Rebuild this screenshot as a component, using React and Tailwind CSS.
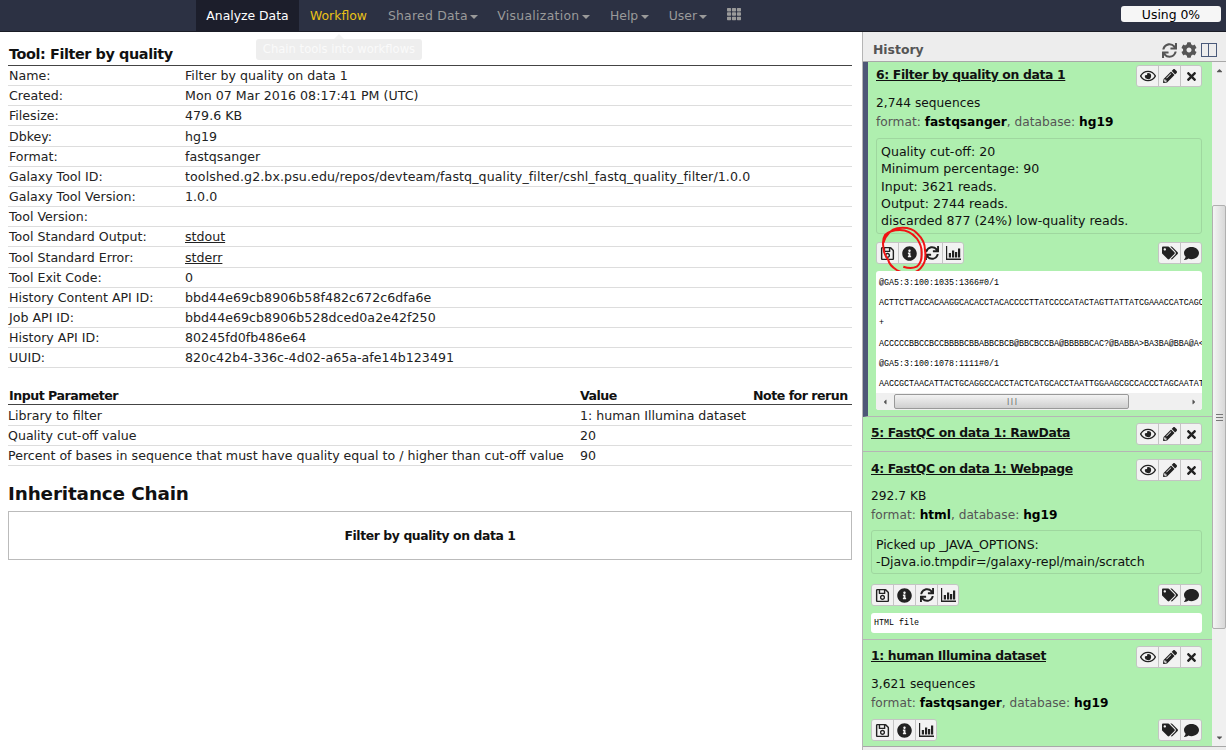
import React from 'react';
import {
  FaRegEye, FaPencilAlt, FaTimes, FaRegSave, FaInfoCircle, FaSync, FaTags, FaComment, FaCog, FaTh, FaCaretDown, FaCaretUp, FaCaretLeft, FaCaretRight,
} from 'react-icons/fa';

const details = [
  ['Name:', 'Filter by quality on data 1'],
  ['Created:', 'Mon 07 Mar 2016 08:17:41 PM (UTC)'],
  ['Filesize:', '479.6 KB'],
  ['Dbkey:', 'hg19'],
  ['Format:', 'fastqsanger'],
  ['Galaxy Tool ID:', 'toolshed.g2.bx.psu.edu/repos/devteam/fastq_quality_filter/cshl_fastq_quality_filter/1.0.0'],
  ['Galaxy Tool Version:', '1.0.0'],
  ['Tool Version:', ''],
  ['Tool Standard Output:', 'stdout', true],
  ['Tool Standard Error:', 'stderr', true],
  ['Tool Exit Code:', '0'],
  ['History Content API ID:', 'bbd44e69cb8906b58f482c672c6dfa6e'],
  ['Job API ID:', 'bbd44e69cb8906b528dced0a2e42f250'],
  ['History API ID:', '80245fd0fb486e64'],
  ['UUID:', '820c42b4-336c-4d02-a65a-afe14b123491'],
];

const params = [
  ['Library to filter', '1: human Illumina dataset'],
  ['Quality cut-off value', '20'],
  ['Percent of bases in sequence that must have quality equal to / higher than cut-off value', '90'],
];

const peek = [
  '@GA5:3:100:1035:1366#0/1',
  'ACTTCTTACCACAAGGCACACCTACACCCCTTATCCCCATACTAGTTATTATCGAAACCATCAGC',
  '+',
  'ACCCCCBBCCBCCBBBBCBBABBCBCB@BBCBCCBA@BBBBBCAC?@BABBA>BA3BA@BBA@A<',
  '@GA5:3:100:1078:1111#0/1',
  'AACCGCTAACATTACTGCAGGCCACCTACTCATGCACCTAATTGGAAGCGCCACCCTAGCAATAT',
];

const NavItem = ({ label, caret, className }) => (
  <div className={`flex items-center pt-[2px] ${className}`}>
    <span>{label}</span>
    {caret && <div className="ml-[2.5px] mt-[1px] w-0 h-0 border-x-[4px] border-x-transparent border-t-[4px] border-t-[#9a9a9a]" />}
  </div>
);

const IconBtn = ({ children }) => (
  <div className="w-[22px] last:w-[20px] h-full flex items-center justify-center border-r border-[#c4c4c4] last:border-r-0 bg-[#f2f2f2] text-[#222]">
    {children}
  </div>
);

const BtnGroup = ({ children }) => (
  <div className="flex h-[22px] border border-[#c4c4c4] rounded-[3px] overflow-hidden">
    {children}
  </div>
);

const TopButtons = () => (
  <BtnGroup>
    <IconBtn><FaRegEye className="w-[16px] h-[16px]" /></IconBtn>
    <IconBtn><FaPencilAlt className="w-[14px] h-[14px]" /></IconBtn>
    <IconBtn><FaTimes className="w-[13px] h-[13px]" /></IconBtn>
  </BtnGroup>
);

const TagButtons = () => (
  <BtnGroup>
    <IconBtn><FaTags className="w-[16px] h-[16px]" /></IconBtn>
    <IconBtn><FaComment className="w-[15px] h-[15px]" /></IconBtn>
  </BtnGroup>
);

// axes with four bars, the FontAwesome 4 bar-chart-o shape
const BarChartIcon = () => (
  <svg className="w-[15px] h-[14px]" viewBox="0 0 15 14" fill="currentColor">
    <path d="M0 0h1.2v12.6H15V14H0z" />
    <path d="M2.8 7h2.2v4.6H2.8zM6 4.5h2.2v7.1H6zM9 6h2.2v5.6H9zM12 2.5h2.2v9.1H12z" />
  </svg>
);

const SaveBtn = () => <IconBtn><FaRegSave className="w-[15px] h-[15px]" /></IconBtn>;
const InfoBtn = () => <IconBtn><FaInfoCircle className="w-[15px] h-[15px]" /></IconBtn>;
const RerunBtn = () => <IconBtn><FaSync className="w-[14px] h-[14px]" /></IconBtn>;
const ChartBtn = () => <IconBtn><BarChartIcon /></IconBtn>;

const Title = ({ children }) => (
  <span className="font-bold underline pt-[1px] leading-[18px] text-[12.4px] tracking-[-0.35px]">{children}</span>
);

const Meta = ({ count, format }) => (
  <div className="text-[12.2px]">
    <div className="h-[19px] leading-[19px] text-[#111] tracking-[0.03px]">{count}</div>
    <div className="h-[19px] leading-[19px] text-[#555]">
      format: <b className="text-black tracking-[-0.03px]">{format}</b>, database: <b className="text-black">hg19</b>
    </div>
  </div>
);

export default function App() {
  return (
    <div className="h-[750px] overflow-hidden bg-white font-['DejaVu_Sans',sans-serif] text-[12.6px] text-[#222] flex flex-col relative">
      <header className="h-[32px] shrink-0 bg-[#2c3143] border-b border-[#1a1c26] flex items-stretch text-[#9a9a9a] text-[12.4px]">
        <div className="ml-[196px] w-[103px] pt-[2px] bg-[#1c1e2b] text-white flex items-center justify-center">Analyze Data</div>
        <NavItem label="Workflow" className="ml-[11px] text-[#eac117]" />
        <NavItem label="Shared Data" caret className="ml-[21px] tracking-[0.25px]" />
        <NavItem label="Visualization" caret className="ml-[19px] tracking-[0.3px]" />
        <NavItem label="Help" caret className="ml-[20px]" />
        <NavItem label="User" caret className="ml-[20px]" />
        <div className="ml-[20px] flex items-center pb-[4px]"><FaTh className="w-[14px] h-[14px] text-[#9a9a9a]" /></div>
        <div className="ml-auto mr-[5px] mt-[6px] w-[100px] h-[16px] rounded-[3px] bg-[#f6f6f6] text-black text-center leading-[18px]">Using 0%</div>
      </header>

      {/* tooltip under the Workflow link */}
      <div className="absolute left-[256px] top-[39px] w-[166px] h-[21px] rounded-[3px] bg-[#eeeeee] text-[#fafafa] text-[11.6px] text-center leading-[21px]">
        <div className="absolute left-[78px] -top-[5px] w-0 h-0 border-x-[5px] border-x-transparent border-b-[5px] border-b-[#f3f3f3]" />
        Chain tools into workflows
      </div>

      <div className="flex flex-1 min-h-0">
        <main className="w-[862px] shrink-0 pl-[8px] pr-[10px] pt-[13px]">
          <h3 className="h-[20px] pl-px font-bold text-[14.4px] leading-[18px] tracking-[-0.4px] text-[#111]">Tool: Filter by quality</h3>
          <div className="border-t border-[#444]">
            {details.map(([label, value, link]) => (
              <div key={label} className="flex h-[20.17px] items-center pt-[2px] border-b border-[#ddd] pl-px">
                <div className="w-[176px] shrink-0">{label}</div>
                <div className={link ? 'underline' : value.length > 60 ? 'tracking-[0.1px]' : 'tracking-[0.04px]'}>{value}</div>
              </div>
            ))}
          </div>

          <div className="mt-[19px] flex h-[15px] items-center pt-[2px] font-bold pl-px border-b border-[#444] box-content tracking-[-0.5px] text-[#111]">
            <div className="w-[571px]">Input Parameter</div>
            <div className="w-[173px]">Value</div>
            <div>Note for rerun</div>
          </div>
          {params.map(([label, value]) => (
            <div key={label} className="flex h-[20.2px] items-center pt-[2px] border-b border-[#ddd]">
              <div className="w-[572px] shrink-0 whitespace-nowrap">{label}</div>
              <div>{value}</div>
            </div>
          ))}

          <h2 className="mt-[16px] font-bold text-[18.4px] leading-[24px] tracking-[-0.15px] text-[#111]">Inheritance Chain</h2>
          <div className="mt-[5px] h-[49px] pt-[2px] border border-[#bbb] flex items-center justify-center text-[12.4px] font-bold tracking-[-0.4px] text-[#111]">
            Filter by quality on data 1
          </div>
        </main>

        <aside className="flex-1 min-w-0 border-l border-[#b5b5b5] bg-[#ededed] flex flex-col">
          <div className="h-[30px] shrink-0 border-b border-[#a8a8a8] flex items-center pl-[10px] pr-[9px] pt-[7px] text-[#555]">
            <span className="font-bold text-[12.4px]">History</span>
            <div className="ml-auto flex items-center gap-[4px] text-[#555]">
              <FaSync className="w-[15px] h-[15px]" />
              <FaCog className="w-[16px] h-[16px]" />
              <div className="w-[16px] h-[14px] border border-[#4a5a7a] flex">
                <div className="w-1/2 border-r border-[#4a5a7a]" />
              </div>
            </div>
          </div>

          <div className="flex flex-1 min-h-0">
            <div className="flex-1 min-w-0 bg-[#afefaf] text-[#111]">
              {/* dataset 6 */}
              <section className="h-[355px] border-l-[5px] border-l-[#4e5777] border-b border-b-[#b5b5b5] pl-[8px] pr-[10px] pt-[3px] relative">
                <div className="flex justify-between h-[26px]">
                  <Title>6: Filter by quality on data 1</Title>
                  <TopButtons />
                </div>
                <div className="mt-[3px]"><Meta count="2,744 sequences" format="fastqsanger" /></div>
                <div className="mt-[6px] h-[96px] border border-[#9fd79f] rounded-[3px] px-[4px] pt-[4px] leading-[17.35px]">
                  <div>Quality cut-off: 20</div>
                  <div>Minimum percentage: 90</div>
                  <div>Input: 3621 reads.</div>
                  <div>Output: 2744 reads.</div>
                  <div>discarded 877 (24%) low-quality reads.</div>
                </div>
                <div className="mt-[8px] flex justify-between relative">
                  <BtnGroup><SaveBtn /><InfoBtn /><RerunBtn /><ChartBtn /></BtnGroup>
                  <TagButtons />
                  {/* hand-drawn red circle around the info button */}
                  <svg className="absolute left-[4px] -top-[16px] w-[47px] h-[50px] pointer-events-none" viewBox="0 0 47 50" fill="none" stroke="#f01414" strokeWidth="2">
                    <path d="M3.3 17 C6 8 12 3 17 2.3 C26 1 33 3 37 7.3 C42 12 45 18 45 24 C46 31 45 36 43 39 C40 44 36 47 30 47.3 C25 48 20 46 16.7 44 C12 41 9 38 8.3 34 C5 30 3.5 25 3.3 20.7 C2.5 15 3 12 5 9 C9 5 14 4 20 4 C27 4 33 8 36.7 12.3 C40 17 42 22 41.7 27.3 C42 33 40 38 36.7 40.7 C32 43 27 42 23.3 40.7" />
                  </svg>
                </div>
                <div className="mt-[7px] h-[139px] rounded-[3px] bg-white overflow-hidden relative font-['Liberation_Mono',monospace] text-[8.33px] text-black">
                  <div className="pt-[2px] pl-[3px]">
                    {peek.map((line, i) => (
                      <div key={i} className="h-[20.2px] leading-[20.2px] whitespace-nowrap">{line}</div>
                    ))}
                  </div>
                  <div className="absolute left-0 right-0 bottom-0 h-[17px] bg-[#f0f0f0] flex items-center text-[#555]">
                    <div className="w-[18px] flex justify-center"><FaCaretLeft className="w-[8px] h-[8px]" /></div>
                    <div className="w-[235px] h-[15px] rounded-[2px] border border-[#999] bg-linear-to-b from-[#f3f3f3] to-[#cfcfcf] text-center leading-[11px] text-[8px] tracking-[-1px] text-[#555]">|||</div>
                    <div className="ml-auto w-[17px] flex justify-center"><FaCaretRight className="w-[8px] h-[8px]" /></div>
                  </div>
                </div>
              </section>

              {/* dataset 5 */}
              <section className="h-[35px] border-b border-b-[#b5b5b5] pl-[8px] pr-[10px] pt-[6px] flex justify-between">
                <Title>5: FastQC on data 1: RawData</Title>
                <TopButtons />
              </section>

              {/* dataset 4 */}
              <section className="h-[188px] border-b border-b-[#b5b5b5] pl-[8px] pr-[10px] pt-[7px]">
                <div className="flex justify-between h-[26px]">
                  <Title>4: FastQC on data 1: Webpage</Title>
                  <TopButtons />
                </div>
                <div className="mt-[2px]"><Meta count="292.7 KB" format="html" /></div>
                <div className="mt-[5px] h-[44px] border border-[#9fd79f] rounded-[3px] px-[4px] pt-[5px] leading-[17.35px] tracking-[-0.1px]">
                  <div>Picked up _JAVA_OPTIONS:</div>
                  <div>-Djava.io.tmpdir=/galaxy-repl/main/scratch</div>
                </div>
                <div className="mt-[10px] flex justify-between">
                  <BtnGroup><SaveBtn /><InfoBtn /><RerunBtn /><ChartBtn /></BtnGroup>
                  <TagButtons />
                </div>
                <div className="mt-[7px] h-[20px] rounded-[3px] bg-white px-[3px] font-['Liberation_Mono',monospace] text-[8.33px] leading-[20px] text-black">HTML file</div>
              </section>

              {/* dataset 1 */}
              <section className="h-[106px] pl-[8px] pr-[10px] pt-[6px]">
                <div className="flex justify-between h-[26px]">
                  <Title>1: human Illumina dataset</Title>
                  <TopButtons />
                </div>
                <div className="mt-[3px]"><Meta count="3,621 sequences" format="fastqsanger" /></div>
                <div className="mt-[6px] flex justify-between">
                  <BtnGroup><SaveBtn /><InfoBtn /><ChartBtn /></BtnGroup>
                  <TagButtons />
                </div>
              </section>
            </div>

            {/* history scrollbar */}
            <div className="w-[14px] shrink-0 bg-[#f0f0f0] flex flex-col items-center text-[#555]">
              <FaCaretUp className="w-[9px] h-[9px] mt-[4px]" />
              <div className="mt-[130px] w-full h-[424px] border border-[#b0b0b0] rounded-[2px] bg-linear-to-r from-[#f4f4f4] to-[#d8d8d8] flex flex-col items-center justify-center gap-[2px]">
                <div className="w-[7px] h-px bg-[#777]" />
                <div className="w-[7px] h-px bg-[#777]" />
                <div className="w-[7px] h-px bg-[#777]" />
              </div>
              <FaCaretDown className="w-[9px] h-[9px] mt-[104px]" />
            </div>
          </div>
          <div className="h-[4px] shrink-0 border-t border-[#a8a8a8] bg-[#ededed]" />
        </aside>
      </div>
    </div>
  );
}
